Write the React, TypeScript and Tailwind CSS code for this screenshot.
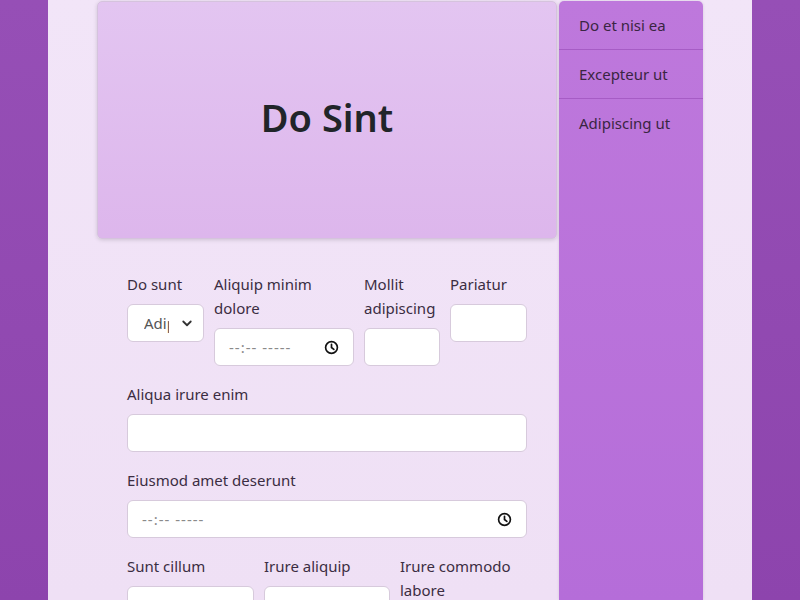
const font = { fontFamily: '"Noto Sans", "Open Sans", sans-serif' }

function Field({ label, className, children }: { label: string; className?: string; children: React.ReactNode }) {
  return (
    <div className={className}>
      <label className="block mb-2 leading-6 text-[15px]">{label}</label>
      {children}
    </div>
  )
}

const inputCls = 'block w-full h-[38px] rounded-[6px] border border-[#d7cadc] bg-white px-3 text-[#212529] outline-none'

function TimeBox() {
  return (
    <div className={inputCls + ' flex items-center justify-between pl-[14px] pr-[14px]'}>
      <span className="text-[#8a8a8a] tracking-[1px] text-[15px]">--:-- -----</span>
      <svg width="15" height="15" viewBox="0 0 16 16" fill="none" stroke="#111" strokeWidth="1.8">
        <circle cx="8" cy="8" r="6.3" />
        <path d="M8 4.5V8l2.5 2" strokeLinecap="round" />
      </svg>
    </div>
  )
}

export default function App() {
  return (
    <div style={font} className="min-h-screen h-[600px] overflow-hidden bg-gradient-to-b from-[#964fb6] to-[#8d44ad] text-[#3b2d42]">
      <div className="mx-auto w-[704px] h-full bg-gradient-to-b from-[#f2e5f8] to-[#efe0f5] px-[49px] pt-px flex gap-[2px]">
        <main className="w-[460px] shrink-0">
          <div className="h-[238px] rounded-[5px] border border-[#d5c3dd] bg-gradient-to-b from-[#e3c5f1] to-[#ddb6ec] shadow-[0_1px_4px_rgba(0,0,0,0.15)] flex items-center justify-center">
            <h1 className="text-[38px] font-semibold text-[#212529] leading-none -mt-[7px]">Do Sint</h1>
          </div>

          <form className="px-[30px] pt-[33px] flex flex-col gap-4">
            <div className="flex items-start gap-[10px]">
              <Field label="Do sunt" className="w-[77px]">
                <div className={inputCls + ' flex items-center pl-[16px] pr-[10px]'}>
                  <span className="w-[25px] overflow-hidden whitespace-nowrap text-[#555] text-[15px]">Adipiscing</span>
                  <span className="flex-1" />
                  <svg width="12" height="12" viewBox="0 0 16 16" fill="none" stroke="#333" strokeWidth="2.4" className="shrink-0">
                    <path d="M3 6l5 5 5-5" strokeLinecap="round" strokeLinejoin="round" />
                  </svg>
                </div>
              </Field>
              <Field label="Aliquip minim dolore" className="w-[140px]">
                <TimeBox />
              </Field>
              <Field label="Mollit adipiscing" className="w-[76px]">
                <input className={inputCls} />
              </Field>
              <Field label="Pariatur" className="w-[77px]">
                <input className={inputCls} />
              </Field>
            </div>

            <Field label="Aliqua irure enim">
              <input className={inputCls} />
            </Field>

            <Field label="Eiusmod amet deserunt">
              <TimeBox />
            </Field>

            <div className="flex items-start gap-[10px]">
              <Field label="Sunt cillum" className="w-[127px]">
                <input className={inputCls} />
              </Field>
              <Field label="Irure aliquip" className="w-[126px]">
                <input className={inputCls} />
              </Field>
              <Field label="Irure commodo labore" className="w-[127px]">
                <input className={inputCls} />
              </Field>
            </div>
          </form>
        </main>

        <aside className="w-[144px] shrink-0 rounded-t-[5px] bg-gradient-to-b from-[#be78dc] to-[#b56dd9] shadow-[0_0_3px_rgba(0,0,0,0.12)]">
          {['Do et nisi ea', 'Excepteur ut', 'Adipiscing ut'].map((t, i) => (
            <div key={t} className={'h-[49px] flex items-center px-5 text-[15px] text-[#3a2542] ' + (i < 2 ? 'border-b border-[#a65cc5]' : '')}>
              {t}
            </div>
          ))}
        </aside>
      </div>
    </div>
  )
}
